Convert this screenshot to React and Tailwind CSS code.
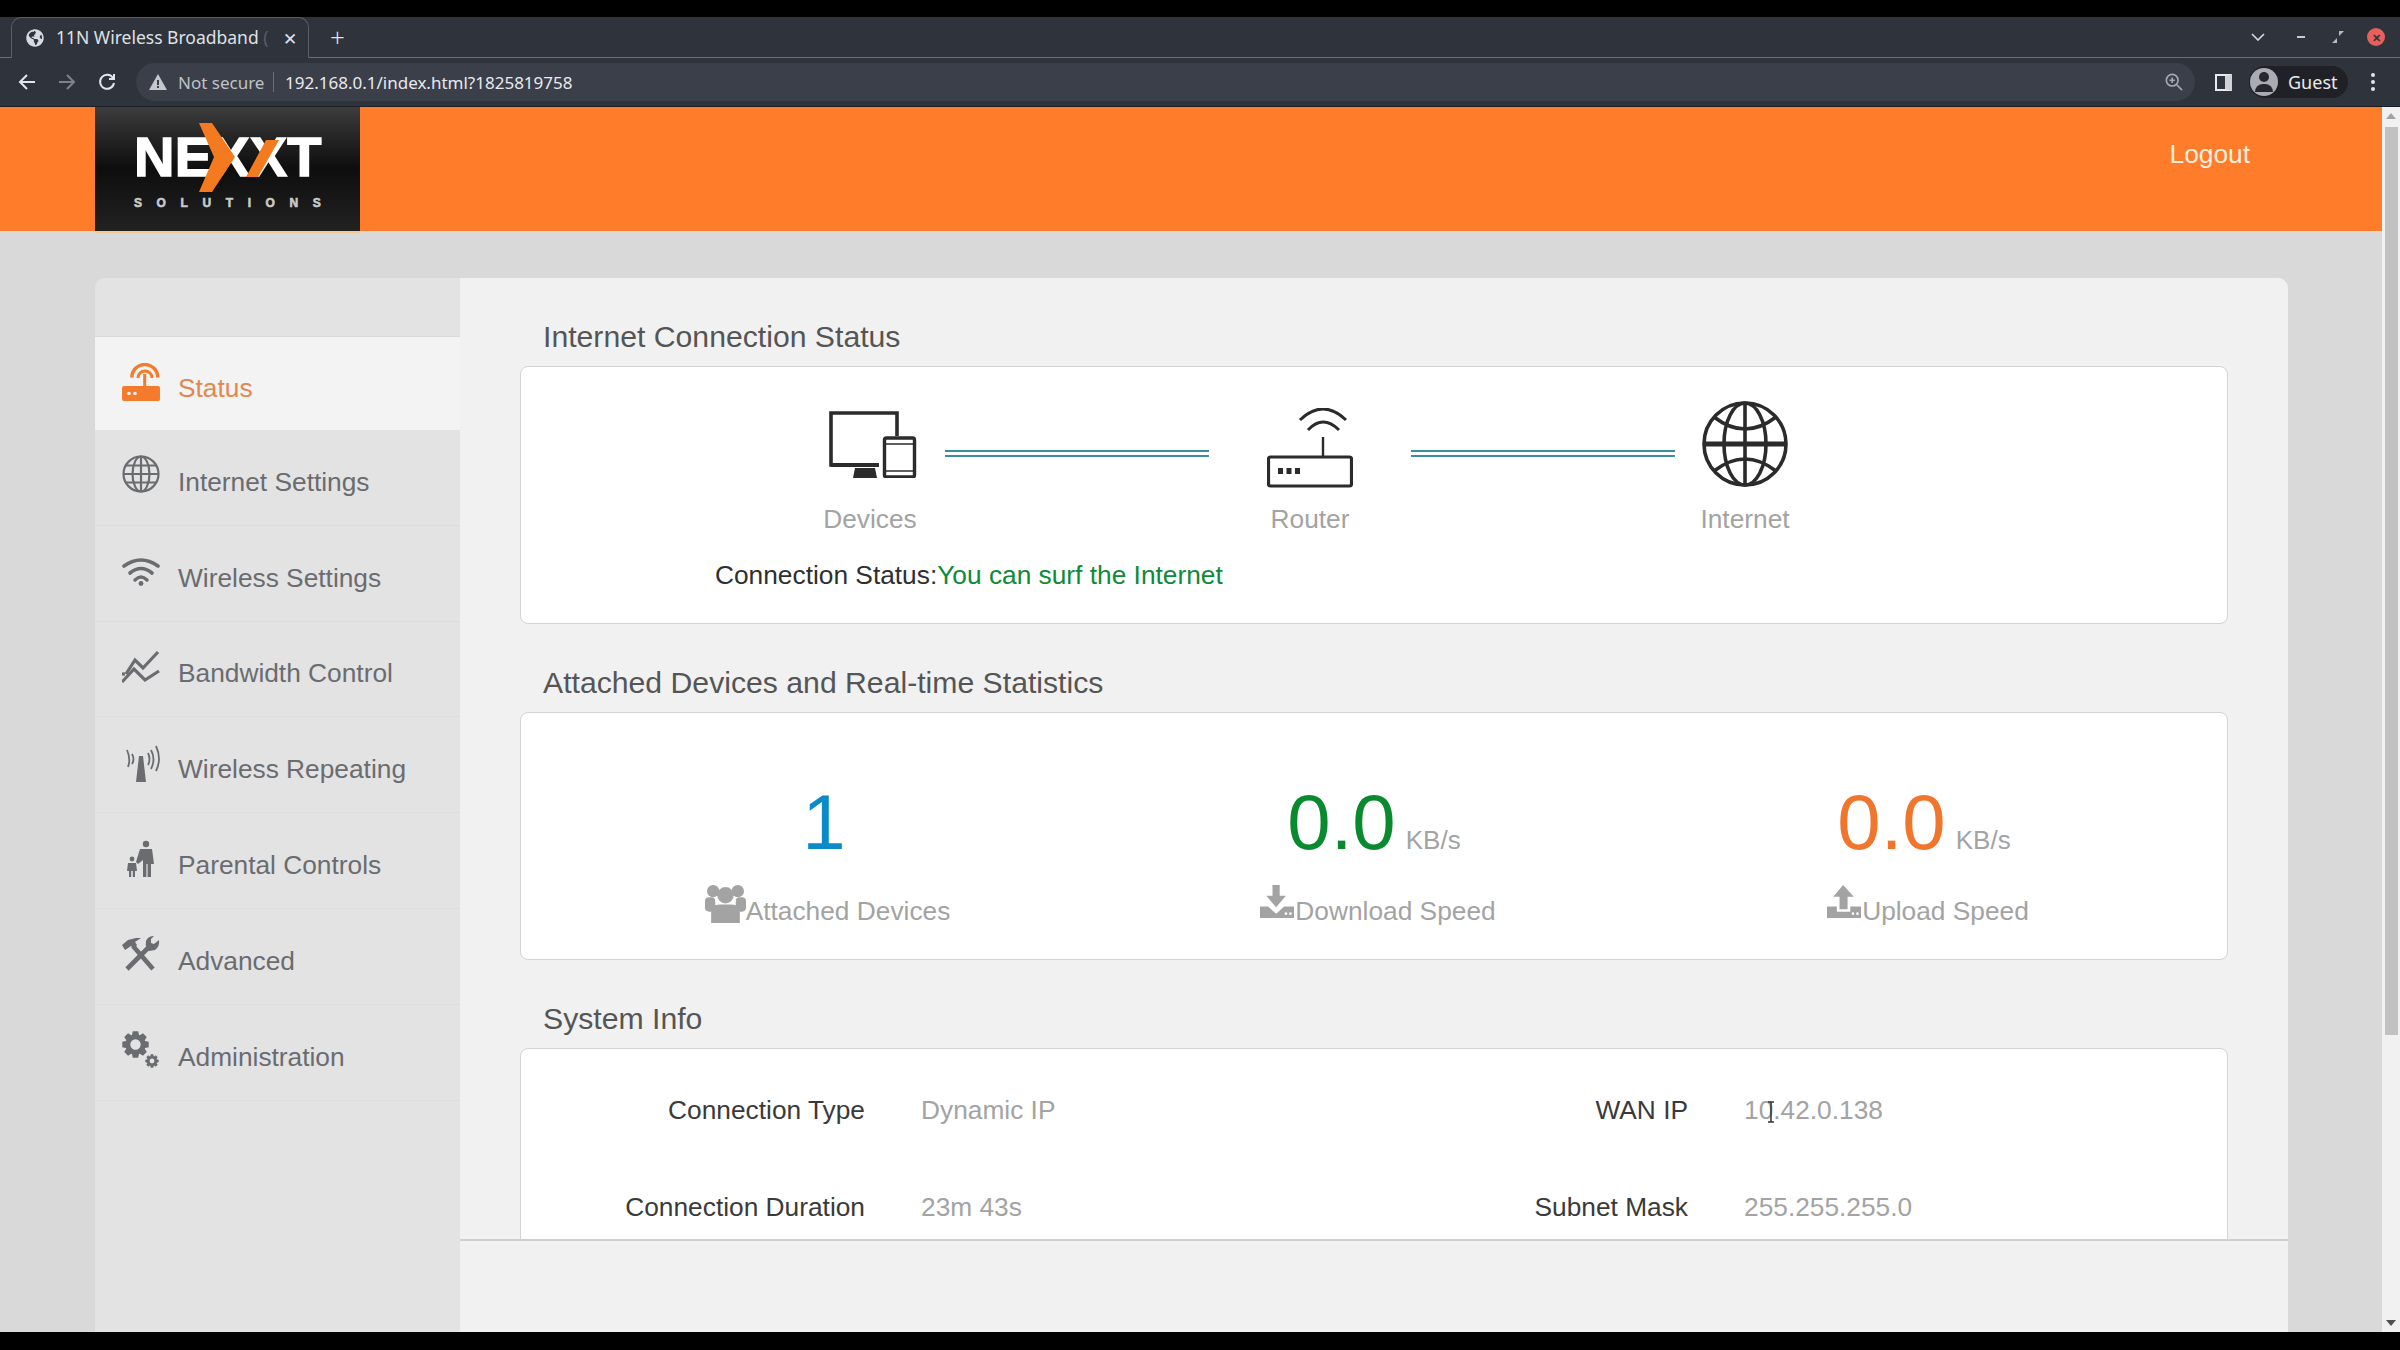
import React from 'react';
import { FaGlobeAmericas } from 'react-icons/fa';

const gearPath = (cx, cy, outer, inner, hole, teeth = 8) => {
  const pts = [];
  const step = (Math.PI * 2) / teeth;
  for (let i = 0; i < teeth; i++) {
    const a = i * step;
    [[-0.3, inner], [-0.17, outer], [0.17, outer], [0.3, inner]].forEach(([o, r]) => {
      pts.push(`${(cx + r * Math.cos(a + o * step * 1.5)).toFixed(2)} ${(cy + r * Math.sin(a + o * step * 1.5)).toFixed(2)}`);
    });
  }
  const ring = `M${cx - hole} ${cy}a${hole} ${hole} 0 1 0 ${hole * 2} 0a${hole} ${hole} 0 1 0 ${-hole * 2} 0Z`;
  return `M${pts.join('L')}Z${ring}`;
};

const StatusIcon = () => (
  <svg viewBox="0 0 38 38" className="w-[38px] h-[38px] translate-y-[2px]" fill="none" stroke="currentColor">
    <rect x="0" y="23" width="38" height="15" rx="2" fill="currentColor" stroke="none" />
    <circle cx="7" cy="30.5" r="1.8" fill="#f3f3f3" stroke="none" />
    <circle cx="13" cy="30.5" r="1.8" fill="#f3f3f3" stroke="none" />
    <path d="M22.7 23V11" strokeWidth="3" />
    <path d="M16 15A7 7 0 0 1 30 15" strokeWidth="3" />
    <path d="M9.8 14.5A13 13 0 0 1 35.8 14.5" strokeWidth="3.4" />
  </svg>
);

const GlobeIcon = () => (
  <svg viewBox="0 0 38 38" className="w-[38px] h-[38px] translate-y-[1px]" fill="none" stroke="currentColor" strokeWidth="2.2">
    <circle cx="19" cy="19" r="17.5" />
    <ellipse cx="19" cy="19" rx="8.5" ry="17.5" />
    <path d="M19 1.5v35M1.5 19h35M4 10.5h30M4 27.5h30" />
  </svg>
);

const WifiIcon = () => (
  <svg viewBox="0 0 38 38" className="w-[38px] h-[38px]" fill="none" stroke="currentColor" strokeLinecap="round">
    <path d="M2 16Q19 4 36 16" strokeWidth="3.6" />
    <path d="M8 23Q19 14 30 23" strokeWidth="3.6" />
    <path d="M13 30Q19 24 25 30" strokeWidth="3.4" />
    <circle cx="19" cy="33.5" r="2.4" fill="currentColor" stroke="none" />
  </svg>
);

const BandwidthIcon = () => (
  <svg viewBox="0 0 38 38" className="w-[38px] h-[38px]" fill="none" stroke="currentColor" strokeWidth="3.2">
    <path d="M4 28L13 14l8 8L36 6" />
    <path d="M0 36l12-13 11 11 14-9" />
    <path d="M0 28h3" />
  </svg>
);

const RepeaterIcon = () => (
  <svg viewBox="0 0 38 38" className="w-[38px] h-[38px] translate-y-[3px]" fill="none" stroke="currentColor" strokeWidth="1.8">
    <path d="M14 37L17 11h4l3 26Z" fill="currentColor" stroke="none" />
    <path d="M10 9q3 5 0 10M5 5q4 9 1 17M26 8q3 6 0 12M29 5q5 9 0 19M34 1q6 13 0 25" />
  </svg>
);

const ParentalIcon = () => (
  <svg viewBox="0 0 38 38" className="w-[38px] h-[38px] translate-y-[2px]" fill="currentColor">
    <circle cx="24" cy="4" r="3.2" />
    <path d="M18 9h12l2 15h-3v13h-3.4V24h-1.2v13H21V20l-5 4-2-2Z" />
    <circle cx="10" cy="19" r="2.4" />
    <path d="M6 23h8l1 8h-2v6h-2.2v-6h-1.6v6H7v-6H5Z" />
  </svg>
);

const AdvancedIcon = () => (
  <svg viewBox="0 0 38 38" className="w-[38px] h-[38px] translate-y-[3px]" fill="currentColor" stroke="none">
    <path d="M0 9l6-5 8-2h5l-6 4 2 3-3 4-3-3-6 4Z" />
    <path d="M11 10L31 33" stroke="currentColor" strokeWidth="4.6" />
    <path d="M5 33L27 11" stroke="currentColor" strokeWidth="4.6" />
    <path d="M27 15l6-1q5-4 4-10l-5 4-3-1V3l3-3q-6 0-8 5-1 4 1 7Z" />
  </svg>
);

const AdminIcon = () => (
  <svg viewBox="0 0 38 38" className="w-[38px] h-[38px] translate-y-[2px]" fill="currentColor" fillRule="evenodd">
    <path d={gearPath(13.5, 13.5, 13.5, 10.2, 5.2)} />
    <path d={gearPath(30, 30, 6.8, 5, 2.4)} />
  </svg>
);

const UsersIcon = () => (
  <svg viewBox="0 0 40 38" className="w-[41px] h-[39px] mb-[5px]" fill="currentColor">
    <circle cx="8" cy="7" r="6" />
    <circle cx="32" cy="7" r="6" />
    <rect x="0" y="13" width="10" height="14" rx="4" />
    <rect x="30" y="13" width="10" height="14" rx="4" />
    <circle cx="20" cy="11" r="8" />
    <path d="M6 38V28q0-8 8-8h12q8 0 8 8v10Z" />
  </svg>
);

const DownloadIcon = () => (
  <svg viewBox="0 0 38 38" className="w-[36px] h-[34px] mb-[9px]" fill="currentColor">
    <path d="M14 0h8v12h7L18 25 7 12h7Z" />
    <path d="M0 24h9l9 8 9-8h11v13H0Z" />
    <circle cx="29" cy="32" r="1.5" fill="#fff" />
    <circle cx="34" cy="32" r="1.5" fill="#fff" />
  </svg>
);

const UploadIcon = () => (
  <svg viewBox="0 0 38 38" className="w-[36px] h-[34px] mb-[9px]" fill="currentColor">
    <path d="M18 0l12 13h-7v14h-9V13H7Z" />
    <path d="M0 24h11v6h15v-6h12v13H0Z" />
    <circle cx="29" cy="32" r="1.5" fill="#fff" />
    <circle cx="34" cy="32" r="1.5" fill="#fff" />
  </svg>
);

const menu = [
  { label: 'Status', Icon: StatusIcon, active: true },
  { label: 'Internet Settings', Icon: GlobeIcon },
  { label: 'Wireless Settings', Icon: WifiIcon },
  { label: 'Bandwidth Control', Icon: BandwidthIcon },
  { label: 'Wireless Repeating', Icon: RepeaterIcon },
  { label: 'Parental Controls', Icon: ParentalIcon },
  { label: 'Advanced', Icon: AdvancedIcon },
  { label: 'Administration', Icon: AdminIcon },
];

const BrowserChrome = () => (
  <div className="font-['Noto_Sans',sans-serif] text-[#dfe1e5]">
    <div className="h-[41px] bg-[#2f333c] border-b border-[#6a6e76] flex items-center relative">
      <div className="ml-[11px] w-[298px] h-[41px] bg-[#2f333c] border border-b-0 border-[#5a5e66] rounded-t-[10px] flex items-center pl-[14px] -mb-px relative">
        <FaGlobeAmericas className="w-[18px] h-[18px] text-[#d5dae3]" />
        <span className="ml-[12px] w-[215px] whitespace-nowrap text-[17.5px] leading-none">
          11N Wireless Broadband <span className="text-[#5a5e66]">(</span>
        </span>
        <span className="ml-[12px] text-[17px] leading-none">✕</span>
      </div>
      <span className="ml-[21px] text-[26px] leading-none font-light">+</span>
      <div className="ml-auto flex items-center">
        <svg viewBox="0 0 14 8" className="w-[14px] h-[8px] mr-[32px]" fill="none" stroke="#d8dade" strokeWidth="1.6"><path d="M1 1l6 6 6-6" /></svg>
        <span className="w-[8px] h-[2px] bg-[#c8cace] mr-[27px]"></span>
        <svg viewBox="0 0 12 12" className="w-[12px] h-[12px] mr-[23px]" fill="#b8bac0"><path d="M7 0l5 0-5 5ZM5 12l-5 0 5-5Z" /></svg>
        <span className="w-[18px] h-[18px] rounded-full bg-[#e7605b] mr-[15px] flex items-center justify-center text-[11px] text-[#2f333c] font-bold leading-none">✕</span>
      </div>
    </div>
    <div className="h-[49px] bg-[#2f333c] border-b border-[#1d1f24] flex items-center">
      <svg viewBox="0 0 18 18" className="ml-[18px] w-[18px] h-[18px]" fill="none" stroke="#e3e5e9" strokeWidth="2"><path d="M17 9H2M9 2L2 9l7 7" /></svg>
      <svg viewBox="0 0 18 18" className="ml-[22px] w-[18px] h-[18px]" fill="none" stroke="#7f838b" strokeWidth="2"><path d="M1 9h15M9 2l7 7-7 7" /></svg>
      <svg viewBox="0 0 18 18" className="ml-[22px] w-[18px] h-[18px]" fill="none" stroke="#e3e5e9" strokeWidth="2"><path d="M15 5a7 7 0 1 0 1 5" /><path d="M16 1v5h-5" /></svg>
      <div className="ml-[20px] w-[2059px] h-[38px] bg-[#3a3f4a] rounded-full flex items-center pl-[12px]">
        <svg viewBox="0 0 18 16" className="ml-[1px] w-[18px] h-[16px]" fill="#c5c7cb"><path d="M9 0l9 16H0Z" /><path d="M8 6h2v5H8ZM8 12h2v2H8Z" fill="#3a3f4a" /></svg>
        <span className="ml-[11px] text-[17px] leading-none text-[#bfc2c7] w-[85px] whitespace-nowrap">Not secure</span>
        <span className="ml-[10px] w-px h-[20px] bg-[#6b6f78]"></span>
        <span className="ml-[11px] text-[17px] leading-none text-[#e8eaed]">192.168.0.1/index.html?1825819758</span>
        <svg viewBox="0 0 20 20" className="ml-auto mr-[12px] w-[18px] h-[18px]" fill="none" stroke="#a6a9af" strokeWidth="1.8"><circle cx="8" cy="8" r="6.5" /><path d="M13 13l6 6M8 5v6M5 8h6" /></svg>
      </div>
      <span className="ml-[20px] w-[17px] h-[17px] border-[2px] border-[#e8eaed] border-r-[7px] border-r-[#d0d2d6]"></span>
      <div className="ml-[17px] w-[99px] h-[32px] rounded-full bg-[#1f2126] flex items-center">
        <span className="ml-[1px] w-[28px] h-[28px] rounded-full bg-[#a9acb2] flex flex-col items-center justify-center overflow-hidden">
          <span className="w-[10px] h-[10px] rounded-full bg-[#26282d]"></span>
          <span className="mt-[2px] w-[18px] h-[8px] rounded-t-full bg-[#26282d]"></span>
        </span>
        <span className="ml-[10px] text-[18px] leading-none text-[#e8eaed]">Guest</span>
      </div>
      <div className="ml-[23px] flex flex-col gap-[3px]">
        <span className="w-[4px] h-[4px] rounded-full bg-[#e3e5e9]"></span>
        <span className="w-[4px] h-[4px] rounded-full bg-[#e3e5e9]"></span>
        <span className="w-[4px] h-[4px] rounded-full bg-[#e3e5e9]"></span>
      </div>
    </div>
  </div>
);

const Logo = () => (
  <div className="relative ml-[95px] w-[265px] h-[126px] bg-gradient-to-b from-[#3d3d3d] via-[#0e0e0e] to-[#222] border-b-2 border-[#f3c892] pl-[39px] pt-[22px] font-['Liberation_Sans',sans-serif]">
    <div className="text-[56px] leading-[56px] font-bold text-white tracking-[0.2px] [-webkit-text-stroke:1.5px_white]">NEXXT</div>
    <div className="mt-[11px] text-[12px] leading-[14px] font-bold text-[#c9c9c9] tracking-[14.6px] whitespace-nowrap [-webkit-text-stroke:0.6px_#c9c9c9]">SOLUTIONS</div>
    <svg viewBox="0 0 265 125" className="absolute inset-0 w-[265px] h-[125px]" fill="#f47a20">
      <path d="M104 16h13l23 34-23 35h-13l15-35Z" />
      <path d="M171 33h13l-21 37h-12Z" />
    </svg>
  </div>
);

const Sidebar = () => (
  <aside className="w-[366px] shrink-0 bg-[#e3e3e3] rounded-tl-[10px] pt-[58px] border-l border-[#d8d8d8]">
    {menu.map(({ label, Icon, active }) => (
      <div
        key={label}
        className={active
          ? 'h-[94px] bg-[#f3f3f3] text-[#e08850] border-t border-[#dadada] flex items-center pl-[27px]'
          : 'h-[95.8px] text-[#6a6c70] border-b border-[#dcdcdc] flex items-center pl-[27px]'}
      >
        <span className={active ? 'text-[#f47a2c] -mt-[8px]' : '-mt-[8px]'}><Icon /></span>
        <span className="ml-[18px] mt-[9px] text-[26.3px] leading-[34px]">{label}</span>
      </div>
    ))}
  </aside>
);

const Heading = ({ children }) => (
  <div className="h-[88px] flex items-end pb-[12px] pl-[83px] text-[30.2px] leading-[34px] text-[#555]">{children}</div>
);

const Card = ({ children, className }) => (
  <div className={`mx-[60px] bg-white border border-[#d3d3d3] rounded-[8px] ${className}`}>{children}</div>
);

const DevicesIcon = () => (
  <svg viewBox="0 0 88 67" className="w-[88px] h-[67px] ml-[6px]" fill="none" stroke="#2b2b2b">
    <path d="M68 25V2H2v52h48" strokeWidth="3.6" />
    <path d="M2 52h48v4H2Z" fill="#2b2b2b" stroke="none" />
    <path d="M26 57h20l2 10H24Z" fill="#2b2b2b" stroke="none" />
    <rect x="55.5" y="27" width="30" height="39" rx="2" strokeWidth="3.4" />
    <path d="M56 33h30M56 60h30" strokeWidth="1.6" />
  </svg>
);

const RouterIcon = () => (
  <svg viewBox="0 0 86 80" className="w-[86px] h-[80px] mt-[8px]" fill="none" stroke="#2b2b2b">
    <path d="M33 12Q56 -10 79 12M41 22Q56 6 72 22" strokeWidth="3" />
    <path d="M56 29v20" strokeWidth="2.4" />
    <rect x="1.5" y="49" width="83" height="29" rx="2" strokeWidth="3.2" />
    <path d="M11 60h5v6h-5ZM19.5 60h5v6h-5ZM28 60h5v6h-5Z" fill="#2b2b2b" stroke="none" />
  </svg>
);

const BigGlobeIcon = () => (
  <svg viewBox="0 0 86 86" className="w-[86px] h-[86px]" fill="none" stroke="#2b2b2b" strokeWidth="3.6">
    <circle cx="43" cy="43" r="41" />
    <ellipse cx="43" cy="43" rx="21" ry="41" />
    <path d="M43 2v82" />
    <path d="M2 43h82" strokeWidth="5" />
    <path d="M12 16q31 24 62 0M12 70q31-24 62 0" />
  </svg>
);

const Wire = ({ className }) => (
  <div className={`w-[264px] h-[7px] mt-[50px] border-y-2 border-[#3a8d9b] ${className}`}></div>
);

const Node = ({ label, children }) => (
  <div className="w-[140px] flex flex-col items-center">
    <div className="h-[88px] flex items-center justify-center">{children}</div>
    <div className="mt-[14px] text-[26.3px] leading-[34px] text-[#a3a3a3] whitespace-nowrap">{label}</div>
  </div>
);

const Stat = ({ value, unit, valueClass, icon, label }) => (
  <div className="flex flex-col items-center">
    <div className="h-[78px] flex items-baseline">
      <span className={`text-[78px] leading-[78px] ${valueClass}`}>{value}</span>
      {unit && <span className="ml-[10px] text-[26px] leading-none text-[#a3a3a3]">{unit}</span>}
    </div>
    <div className="mt-[27px] ml-[7px] h-[40px] flex items-end text-[#a3a3a3]">
      {icon}
      <span className="text-[26.3px] leading-[34px]">{label}</span>
    </div>
  </div>
);

const InfoPair = ({ label, value, children }) => (
  <div className="flex h-[97px] text-[26.3px] leading-[34px]">
    <div className="w-[344px] text-right text-[#3a3a3a]">{label}</div>
    <div className="relative ml-[56px] text-[#a3a3a3]">{value}{children}</div>
  </div>
);

export default function App() {
  return (
    <div className="w-[2400px] h-[1350px] overflow-hidden bg-black flex flex-col font-['Liberation_Sans',sans-serif]">
      <div className="h-[17px] shrink-0 bg-black"></div>
      <BrowserChrome />
      <div className="h-[1225px] flex">
        <div className="w-[2382px] bg-[#d9d9d9] flex flex-col">
          <header className="h-[124px] shrink-0 bg-[#ff7c2b] flex items-start">
            <Logo />
            <div className="ml-auto mr-[132px] mt-[30px] text-[26.3px] leading-[34px] text-[#ffeede]">Logout</div>
          </header>
          <div className="flex-1 flex pl-[94px] pr-[94px] pt-[47px] min-h-0">
            <Sidebar />
            <main className="flex-1 flex flex-col bg-[#f1f1f1] rounded-tr-[10px] min-w-0">
              <div className="h-[961px] overflow-hidden">
                <Heading>Internet Connection Status</Heading>
                <Card className="pt-[33px] pb-[31px]">
                  <div className="flex pl-[279px]">
                    <Node label="Devices"><DevicesIcon /></Node>
                    <Wire className="ml-[5px] mr-[31px]" />
                    <Node label="Router"><RouterIcon /></Node>
                    <Wire className="ml-[31px]" />
                    <Node label="Internet"><BigGlobeIcon /></Node>
                  </div>
                  <div className="mt-[22px] pl-[194px] text-[26.3px] leading-[34px]">
                    <span className="text-[#2f2f2f]">Connection Status:</span>
                    <span className="text-[#0f8a36]">You can surf the Internet</span>
                  </div>
                </Card>
                <Heading>Attached Devices and Real-time Statistics</Heading>
                <Card className="px-[28px] pt-[70px] pb-[31px] grid grid-cols-3">
                  <Stat value="1" valueClass="text-[#0a8ac6]" label="Attached Devices" icon={<UsersIcon />} />
                  <Stat value="0.0" unit="KB/s" valueClass="text-[#0a8a2e]" label="Download Speed" icon={<DownloadIcon />} />
                  <Stat value="0.0" unit="KB/s" valueClass="text-[#f0752d]" label="Upload Speed" icon={<UploadIcon />} />
                </Card>
                <Heading>System Info</Heading>
                <Card className="pt-[44px] grid grid-cols-[823px_1fr]">
                  <InfoPair label="Connection Type" value="Dynamic IP" />
                  <InfoPair label="WAN IP" value="10.42.0.138">
                    <svg viewBox="0 0 8 22" className="absolute left-[23px] top-[8px] w-[8px] h-[22px]" fill="none" stroke="#333" strokeWidth="1.5"><path d="M1 1h6M4 1v20M1 21h6" /></svg>
                  </InfoPair>
                  <InfoPair label="Connection Duration" value="23m 43s" />
                  <InfoPair label="Subnet Mask" value="255.255.255.0" />
                </Card>
              </div>
              <div className="flex-1 border-t-2 border-[#cfcfcf]"></div>
            </main>
          </div>
        </div>
        <div className="w-[18px] bg-[#f1f1f1] flex flex-col items-center py-[6px]">
          <span className="w-0 h-0 border-x-[5px] border-x-transparent border-b-[6px] border-b-[#a3a3a3]"></span>
          <span className="mt-[8px] w-[13px] h-[908px] bg-[#c1c1c1]"></span>
          <span className="mt-auto w-0 h-0 border-x-[5px] border-x-transparent border-t-[6px] border-t-[#505050]"></span>
        </div>
      </div>
      <div className="h-[18px] shrink-0 bg-black"></div>
    </div>
  );
}
